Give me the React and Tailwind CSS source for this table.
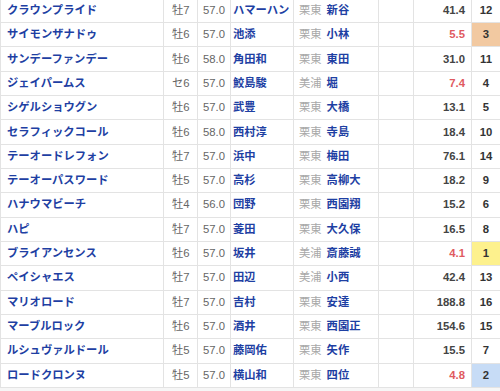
import React from "react";

const rows = [
  ["クラウンプライド", "牡7", "57.0", "ハマーハン", "栗東", "新谷", "41.4", "12", false, ""],
  ["サイモンザナドゥ", "牡6", "57.0", "池添", "栗東", "小林", "5.5", "3", true, "bg-[#f2c9a1]"],
  ["サンデーファンデー", "牡6", "58.0", "角田和", "栗東", "東田", "31.0", "11", false, ""],
  ["ジェイパームス", "セ6", "57.0", "鮫島駿", "美浦", "堀", "7.4", "4", true, ""],
  ["シゲルショウグン", "牡6", "57.0", "武豊", "栗東", "大橋", "13.1", "5", false, ""],
  ["セラフィックコール", "牡6", "58.0", "西村淳", "栗東", "寺島", "18.4", "10", false, ""],
  ["テーオードレフォン", "牡7", "57.0", "浜中", "栗東", "梅田", "76.1", "14", false, ""],
  ["テーオーパスワード", "牡5", "57.0", "高杉", "栗東", "高柳大", "18.2", "9", false, ""],
  ["ハナウマビーチ", "牡4", "56.0", "団野", "栗東", "西園翔", "15.2", "6", false, ""],
  ["ハピ", "牡7", "57.0", "菱田", "栗東", "大久保", "16.5", "8", false, ""],
  ["ブライアンセンス", "牡6", "57.0", "坂井", "美浦", "斎藤誠", "4.1", "1", true, "bg-[#fdf18d]"],
  ["ペイシャエス", "牡7", "57.0", "田辺", "美浦", "小西", "42.4", "13", false, ""],
  ["マリオロード", "牡7", "57.0", "吉村", "栗東", "安達", "188.8", "16", false, ""],
  ["マーブルロック", "牡6", "57.0", "酒井", "栗東", "西園正", "154.6", "15", false, ""],
  ["ルシュヴァルドール", "牡5", "57.0", "藤岡佑", "栗東", "矢作", "15.5", "7", false, ""],
  ["ロードクロンヌ", "牡5", "57.0", "横山和", "栗東", "四位", "4.8", "2", true, "bg-[#c7dcf6]"],
];

const cell = "border-l border-[#e3e3e3] flex items-center h-full";

export default function App() {
  return (
    <div
      className="w-[500px] h-[391px] overflow-hidden bg-[#f6f6f6] text-[11.3px]"
      style={{ fontFamily: '"Liberation Sans", "Noto Sans CJK JP", sans-serif' }}
    >
      <div className="mt-[-1.33px] bg-white">
        {rows.map(([name, sex, kg, jockey, area, trainer, odds, pop, hot, popBg]) => (
          <div
            key={name}
            className="grid grid-cols-[163px_34px_33px_63px_85px_35px_58px_29px] h-[24.33px] border-b border-[#e3e3e3]"
          >
            <div className={`${cell} pl-[6px] font-bold text-[#1e3fa3]`}>{name}</div>
            <div className={`${cell} pl-[8px] text-[#666]`}>{sex}</div>
            <div className={`${cell} pl-[5px] text-[#666]`}>{kg}</div>
            <div className={`${cell} pl-[2px] font-bold text-[#1e3fa3] whitespace-nowrap`}>{jockey}</div>
            <div className={`${cell} pl-[5px] whitespace-nowrap`}>
              <span className="text-[#a8a8a8] mr-[5px]">{area}</span>
              <span className="font-bold text-[#1e3fa3]">{trainer}</span>
            </div>
            <div className={cell}></div>
            <div
              className={`${cell} justify-end pr-[6px] font-bold ${hot ? "text-[#e05a5f]" : "text-[#444]"}`}
            >
              {odds}
            </div>
            <div className={`${cell} justify-center font-bold text-[#333] ${popBg}`}>{pop}</div>
          </div>
        ))}
      </div>
    </div>
  );
}
